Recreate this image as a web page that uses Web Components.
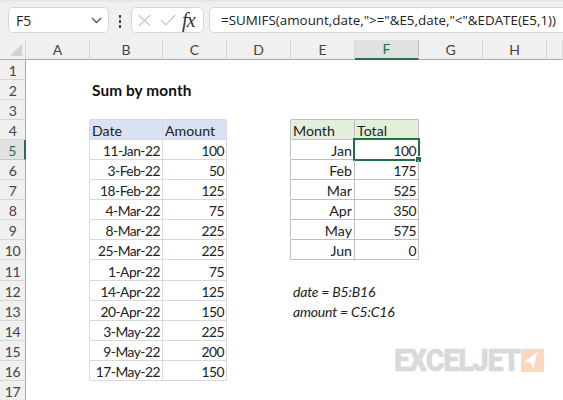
<!DOCTYPE html>
<html><head><meta charset="utf-8">
<style>
html,body{margin:0;padding:0;background:#fff;overflow:hidden}
body{width:563px;height:400px;font-family:"Lato","Liberation Sans",sans-serif}
</style></head>
<body>
<x-app>
  <x-formula-bar name="F5" formula='=SUMIFS(amount,date,"&gt;="&amp;E5,date,"&lt;"&amp;EDATE(E5,1))'></x-formula-bar>
  <x-sheet></x-sheet>
</x-app>
<script>
function shadow(el,html){el.attachShadow({mode:'open'}).innerHTML=html;return el.shadowRoot}

customElements.define('x-app',class extends HTMLElement{constructor(){super();shadow(this,`<style>
:host{display:flex;flex-direction:column;width:563px;height:400px;overflow:hidden;position:relative;background:#fff}
</style><slot></slot><x-logo></x-logo>`)}});

customElements.define('x-box',class extends HTMLElement{constructor(){super();shadow(this,`<style>
:host{display:flex;align-items:center;box-sizing:border-box;height:26px;background:#fff;border:1px solid #d6d6d6;border-radius:5px}
</style><slot></slot>`)}});

customElements.define('x-formula-bar',class extends HTMLElement{
 connectedCallback(){
  const f=this.getAttribute('formula'),n=this.getAttribute('name');
  const r=shadow(this,`<style>
:host{display:flex;align-items:flex-start;box-sizing:border-box;height:40px;padding:7px 0 0 8px;background:linear-gradient(#e2e2e2 0,#f0f0f0 3px);flex:none}
.name{width:101px;justify-content:space-between;padding:0 6px 0 7px;font:14px "Open Sans",sans-serif;color:#222}
.dots{width:22px;display:flex;flex-direction:column;align-items:center;gap:2.5px;padding-top:8px}
.dots i{width:2.5px;height:2.5px;background:#444;display:block}
.fx{width:73px;padding-left:6px;gap:9px}
.fx svg{flex:none}
.fx span{font:italic 20px "Liberation Serif",serif;color:#333;margin-left:-3px;letter-spacing:-.8px;line-height:24px}
.input{flex:1;margin-left:5px;padding-left:11px;border-right:0;border-radius:5px 0 0 5px;font:13.4px "Open Sans",sans-serif;color:#222;white-space:nowrap}
</style>
<x-box class="name"><span class="n"></span><svg width="11" height="7" viewBox="0 0 11 7"><path d="M1 1l4.5 4.5L10 1" fill="none" stroke="#555" stroke-width="1.3"/></svg></x-box>
<div class="dots"><i></i><i></i><i></i></div>
<x-box class="fx"><svg width="13" height="13" viewBox="0 0 13 13"><path d="M.7 1l11.6 11M12.3 1L.7 12" fill="none" stroke="#c9c9c9" stroke-width="1.2"/></svg>
<svg width="16" height="12" viewBox="0 0 16 12"><path d="M.8 6l5 5L15.2 1" fill="none" stroke="#c9c9c9" stroke-width="1.2"/></svg><span>fx</span></x-box>
<x-box class="input"><span class="f"></span></x-box>`);
  r.querySelector('.n').textContent=n;r.querySelector('.f').textContent=f;
 }
});

customElements.define('x-head',class extends HTMLElement{constructor(){super();shadow(this,`<style>
:host{display:flex;align-items:center;justify-content:center;box-sizing:border-box;background:#f0f0f0;color:#444;font:14px "Lato",sans-serif;border-right:1px solid #d6d6d6;border-bottom:1px solid #d6d6d6;overflow:hidden}
:host([col]){border-bottom:1px solid #a8a8a8;padding-bottom:1px}
:host([row]){border-right:1px solid #a8a8a8;padding-top:2px;letter-spacing:-.4px}
:host([on]){background:#e1e1e1;color:#217346}
:host([col][on]){border-bottom:2px solid #217346;border-right-color:#c4c4c4}
:host([row][on]){border-right:2px solid #217346;border-bottom-color:#c4c4c4}
</style><slot></slot>`)}});

customElements.define('x-corner',class extends HTMLElement{constructor(){super();shadow(this,`<style>
:host{display:flex;align-items:flex-end;justify-content:flex-end;box-sizing:border-box;background:#f0f0f0;border-right:1px solid #d6d6d6;border-bottom:1px solid #a8a8a8;padding:0 3px 3px 0}
</style><svg width="12" height="12" viewBox="0 0 12 12"><path d="M12 0V12H0Z" fill="#d2d2d2"/></svg>`)}});

customElements.define('x-cell',class extends HTMLElement{constructor(){super();shadow(this,`<style>
:host{display:flex;align-items:center;box-sizing:border-box;padding:2px 2px 0 2px;font:14.2px "Lato",sans-serif;color:#222;white-space:nowrap;min-width:0;position:relative;border-right:1px solid var(--br,transparent);border-bottom:1px solid var(--bb,transparent);background:var(--bg,transparent)}
:host([r]){justify-content:flex-end}
:host([n]){font-size:13.8px;letter-spacing:-.5px}
:host([b]){font-weight:700;font-size:15.4px;color:#111;letter-spacing:.1px;padding-top:0}
:host([i]){font-style:italic;letter-spacing:-.2px;font-size:14px}
</style><slot></slot>`)}});

customElements.define('x-selection',class extends HTMLElement{constructor(){super();shadow(this,`<style>
:host{position:absolute;left:-2px;top:-2px;right:-2px;bottom:-2px;border:2px solid #1f7145;box-sizing:border-box;pointer-events:none}
i{position:absolute;right:-3px;bottom:-3px;width:5px;height:5px;background:#1f7145;outline:1px solid #fff}
</style><i></i>`)}});

customElements.define('x-logo',class extends HTMLElement{constructor(){super();shadow(this,`<style>
:host{position:absolute;left:394px;top:349px;display:flex;align-items:flex-start;height:23px}
.w{width:126.7px;height:23px;overflow:visible}
span{font:900 32px "Roboto",sans-serif;color:#d9d9d9;letter-spacing:-1.4px;line-height:23px;display:inline-block;transform:scaleX(.9);transform-origin:left;white-space:nowrap;-webkit-text-stroke:.4px #d9d9d9}
svg{display:block}
</style><div class="w"><span>EXCELJET</span></div><svg width="23" height="23" viewBox="0 0 23 23"><rect width="23" height="23" fill="#fbd8bd"/><path d="M16 3L3 13.2l6.5.4L12.5 20.5Z" fill="#fff"/></svg>`)}});

customElements.define('x-sheet',class extends HTMLElement{
 connectedCallback(){
  const r=shadow(this,`<style>
:host{display:grid;flex:1;min-height:0;overflow:hidden;
 grid-template-columns:26px 64px 73px repeat(6,64px) 16px;
 grid-template-rows:20px repeat(10,20px) 21px repeat(4,20px) 20px 20px 20px;}
</style>`);
  const cols='ABCDEFGHI'.split('');
  const data={};
  const put=(c,rw,t,o={})=>{data[c+rw]=Object.assign({t},o)};
  put('B',2,'Sum by month',{b:1});
  const left=[['11-Jan-22',100],['3-Feb-22',50],['18-Feb-22',125],['4-Mar-22',75],['8-Mar-22',225],['25-Mar-22',225],['1-Apr-22',75],['14-Apr-22',125],['20-Apr-22',150],['3-May-22',225],['9-May-22',200],['17-May-22',150]];
  put('B',4,'Date');put('C',4,'Amount');
  left.forEach((v,i)=>{put('B',5+i,v[0],{r:1,n:1});put('C',5+i,String(v[1]),{r:1,n:1})});
  const right=[['Jan',100],['Feb',175],['Mar',525],['Apr',350],['May',575],['Jun',0]];
  put('E',4,'Month');put('F',4,'Total');
  right.forEach((v,i)=>{put('E',5+i,v[0],{r:1});put('F',5+i,String(v[1]),{r:1,n:1})});
  put('E',12,'date = B5:B16',{i:1});put('E',13,'amount = C5:C16',{i:1});
  const styles={};
  const st=(k,p,v)=>{(styles[k]=styles[k]||{})[p]=v};
  const table=(c1,c2,r1,r2,line,hline,fill)=>{
   const a=cols.indexOf(c1),b=cols.indexOf(c2);
   for(let rw=r1;rw<=r2;rw++){
    const col=rw===r1?hline:line;
    const cA=cols[a-1];st(cA+rw,'--br',col);
    for(let c=a;c<=b;c++){
     const k=cols[c]+rw;st(k,'--br',col);st(k,'--bb',col);
     if(rw===r1)st(k,'--bg',fill);
     if(rw===r1)st(cols[c]+(rw-1),'--bb',hline);
    }
   }
  };
  table('B','C',4,16,'#d9d9d9','#d3dae6','#d9e1f2');
  table('E','F',4,10,'#bfbfbf','#bfbfbf','#e2efda');
  const add=e=>r.appendChild(e);
  add(document.createElement('x-corner'));
  cols.forEach(c=>{const h=document.createElement('x-head');h.setAttribute('col','');if(c==='F')h.setAttribute('on','');if(c!=='I')h.textContent=c;add(h)});
  for(let rw=1;rw<=17;rw++){
   const h=document.createElement('x-head');h.setAttribute('row','');if(rw===5)h.setAttribute('on','');h.textContent=rw;add(h);
   cols.forEach(c=>{
    const k=c+rw,e=document.createElement('x-cell'),d=data[k];
    if(d){e.textContent=d.t;['r','b','i','n'].forEach(a=>{if(d[a])e.setAttribute(a,'')})}
    if(styles[k])for(const p in styles[k])e.style.setProperty(p,styles[k][p]);
    if(k==='F5')e.appendChild(document.createElement('x-selection'));
    add(e);
   });
  }
 }
});
</script>
</body></html>
